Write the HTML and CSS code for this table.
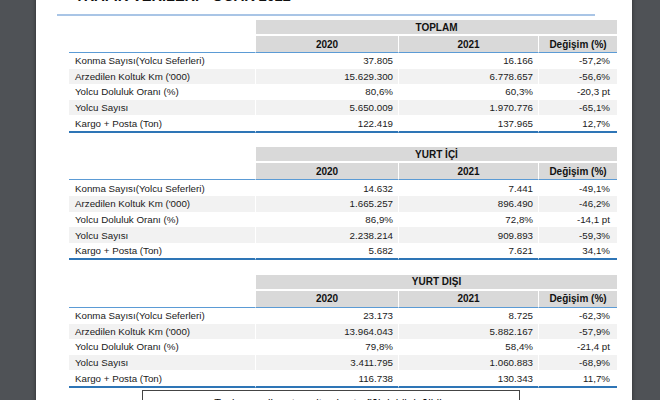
FILE: index.html
```html
<!DOCTYPE html>
<html lang="tr">
<head>
<meta charset="utf-8">
<title>Trafik Verileri - Ocak 2022</title>
<link rel="stylesheet" href="styles.css">
</head>
<body>
<div class="viewer">
  <div class="page">
    <div class="title-bar"><h1 class="title">TRAFİK VERİLERİ - OCAK 2022</h1></div>

    <table class="stats">
      <colgroup><col class="c-label"><col class="c-y1"><col class="c-y2"><col class="c-ch"></colgroup>
      <thead>
        <tr class="group-row"><th class="blank"></th><th class="group" colspan="3">TOPLAM</th></tr>
        <tr class="year-row"><th class="blank"></th><th>2020</th><th>2021</th><th>Değişim (%)</th></tr>
      </thead>
      <tbody>
        <tr><td>Konma Sayısı(Yolcu Seferleri)</td><td>37.805</td><td>16.166</td><td class="ch">-57,2%</td></tr>
        <tr class="alt"><td>Arzedilen Koltuk Km ('000)</td><td>15.629.300</td><td>6.778.657</td><td class="ch">-56,6%</td></tr>
        <tr><td>Yolcu Doluluk Oranı (%)</td><td>80,6%</td><td>60,3%</td><td class="ch">-20,3 pt</td></tr>
        <tr class="alt"><td>Yolcu Sayısı</td><td>5.650.009</td><td>1.970.776</td><td class="ch">-65,1%</td></tr>
        <tr class="last"><td>Kargo + Posta (Ton)</td><td>122.419</td><td>137.965</td><td class="ch">12,7%</td></tr>
      </tbody>
    </table>

    <table class="stats">
      <colgroup><col class="c-label"><col class="c-y1"><col class="c-y2"><col class="c-ch"></colgroup>
      <thead>
        <tr class="group-row"><th class="blank"></th><th class="group" colspan="3">YURT İÇİ</th></tr>
        <tr class="year-row"><th class="blank"></th><th>2020</th><th>2021</th><th>Değişim (%)</th></tr>
      </thead>
      <tbody>
        <tr><td>Konma Sayısı(Yolcu Seferleri)</td><td>14.632</td><td>7.441</td><td class="ch">-49,1%</td></tr>
        <tr class="alt"><td>Arzedilen Koltuk Km ('000)</td><td>1.665.257</td><td>896.490</td><td class="ch">-46,2%</td></tr>
        <tr><td>Yolcu Doluluk Oranı (%)</td><td>86,9%</td><td>72,8%</td><td class="ch">-14,1 pt</td></tr>
        <tr class="alt"><td>Yolcu Sayısı</td><td>2.238.214</td><td>909.893</td><td class="ch">-59,3%</td></tr>
        <tr class="last"><td>Kargo + Posta (Ton)</td><td>5.682</td><td>7.621</td><td class="ch">34,1%</td></tr>
      </tbody>
    </table>

    <table class="stats">
      <colgroup><col class="c-label"><col class="c-y1"><col class="c-y2"><col class="c-ch"></colgroup>
      <thead>
        <tr class="group-row"><th class="blank"></th><th class="group" colspan="3">YURT DIŞI</th></tr>
        <tr class="year-row"><th class="blank"></th><th>2020</th><th>2021</th><th>Değişim (%)</th></tr>
      </thead>
      <tbody>
        <tr><td>Konma Sayısı(Yolcu Seferleri)</td><td>23.173</td><td>8.725</td><td class="ch">-62,3%</td></tr>
        <tr class="alt"><td>Arzedilen Koltuk Km ('000)</td><td>13.964.043</td><td>5.882.167</td><td class="ch">-57,9%</td></tr>
        <tr><td>Yolcu Doluluk Oranı (%)</td><td>79,8%</td><td>58,4%</td><td class="ch">-21,4 pt</td></tr>
        <tr class="alt"><td>Yolcu Sayısı</td><td>3.411.795</td><td>1.060.883</td><td class="ch">-68,9%</td></tr>
        <tr class="last"><td>Kargo + Posta (Ton)</td><td>116.738</td><td>130.343</td><td class="ch">11,7%</td></tr>
      </tbody>
    </table>

    <div class="note">Toplam verilere transit yolcu trafiği dahil değildir.</div>
  </div>
</div>
</body>
</html>
```

FILE: styles.css
```css
html, body {
  margin: 0;
  padding: 0;
}

body {
  background: #4f5256;
  height: 400px;
  overflow: hidden;
  font-family: "Liberation Sans", Arial, sans-serif;
  color: #1a1a1a;
}

.viewer {
  display: flex;
  align-items: flex-start;
}

.page {
  margin-left: 36px;
  margin-top: -20px;
  width: 596px;
  min-height: 460px;
  background: #ffffff;
  box-shadow: 0 0 4px rgba(0, 0, 0, 0.45);
}

.title-bar {
  margin-left: 21px;
  width: 538px;
  padding-top: 7px;
  padding-bottom: 8.5px;
  border-bottom: 2px solid #a9c5e6;
}

.title {
  margin: 0;
  padding-left: 18px;
  font-size: 14.5px;
  line-height: 18px;
  font-weight: bold;
  letter-spacing: 0;
  color: #111;
}

.stats {
  margin-left: 33px;
  margin-top: 4.5px;
  width: 548px;
  border-collapse: separate;
  border-spacing: 0;
  table-layout: fixed;
  font-size: 9.75px;
}

.stats + .stats {
  margin-top: 14.5px;
}

.c-label { width: 186px; }
.c-y1 { width: 143px; }
.c-y2 { width: 140px; }
.c-ch { width: 79px; }

.stats th {
  padding: 0;
  font-weight: bold;
  font-size: 10px;
  text-align: center;
  color: #111;
  background: #d9d9d9;
  border-left: 1px solid #fff;
}

.stats th.blank {
  background: #fff;
  border-left: 0;
}

.group-row th {
  height: 14px;
  border-bottom: 2px solid #fff;
}

.year-row th {
  height: 16px;
  border-bottom: 1px solid #5b9bd5;
}

.stats td {
  height: 15.6px;
  padding: 0 5px 0 0;
  text-align: right;
  white-space: nowrap;
  border-left: 1px solid #fff;
}

.stats td:first-child {
  text-align: left;
  padding: 0 0 0 6px;
  border-left: 0;
}

.stats td.ch {
  padding-right: 7px;
}

.stats tr.alt td {
  background: #f2f2f2;
}

.stats tr.last td {
  border-bottom: 2px solid #2e75b6;
}

.note {
  margin-left: 106px;
  margin-top: 2px;
  width: 376px;
  border: 1px solid #444;
  padding: 5px 0;
  text-align: center;
  font-size: 11px;
  line-height: 14px;
  color: #111;
}
```
